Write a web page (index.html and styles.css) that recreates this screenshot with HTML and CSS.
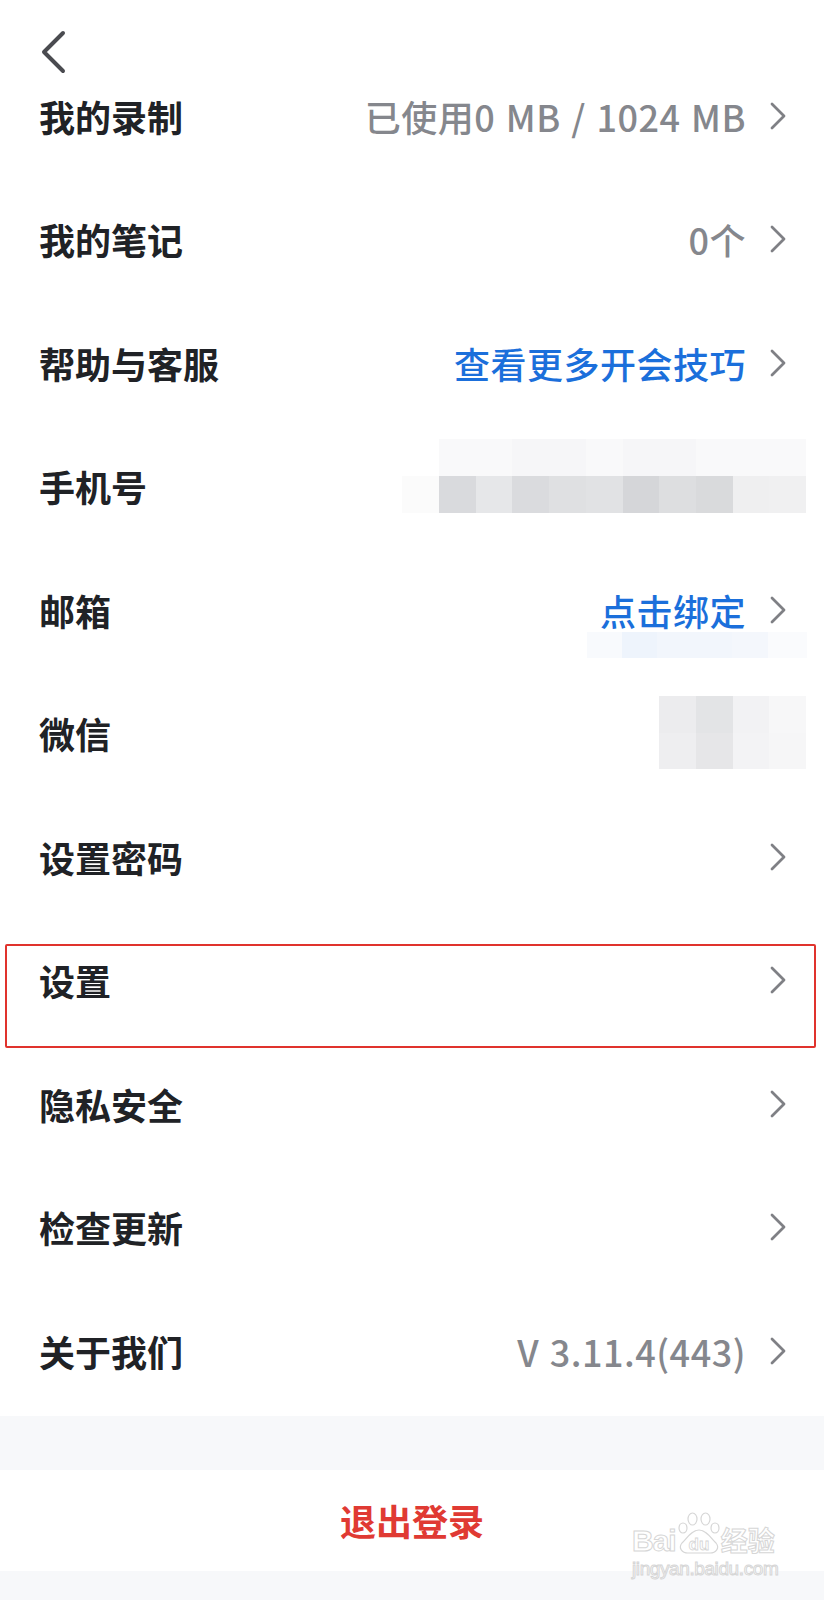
FILE: index.html
```html
<!DOCTYPE html>
<html lang="zh-CN">
<head>
  <meta charset="UTF-8">
  <meta name="viewport" content="width=device-width, initial-scale=1.0">
  <link rel="stylesheet" href="styles.css">
  <title>个人设置</title>
</head>
<body>
  <div class="header">
    <svg class="back" width="30" height="46" viewBox="0 0 30 46">
      <polyline points="24,3 5,22 24,41" fill="none" stroke="#4a4b50" stroke-width="4" stroke-linecap="round" stroke-linejoin="round"/>
    </svg>
  </div>

  <ul class="list">
    <li class="item">
      <span class="label">我的录制</span>
      <span class="value">已使用0 MB / 1024 MB</span>
      <svg class="arrow" width="17" height="28" viewBox="0 0 17 28"><polyline points="2,2 14,14 2,26" fill="none" stroke="#7f8085" stroke-width="2.8" stroke-linecap="round" stroke-linejoin="round"/></svg>
    </li>
    <li class="item">
      <span class="label">我的笔记</span>
      <span class="value">0个</span>
      <svg class="arrow" width="17" height="28" viewBox="0 0 17 28"><polyline points="2,2 14,14 2,26" fill="none" stroke="#7f8085" stroke-width="2.8" stroke-linecap="round" stroke-linejoin="round"/></svg>
    </li>
    <li class="item">
      <span class="label">帮助与客服</span>
      <span class="value link">查看更多开会技巧</span>
      <svg class="arrow" width="17" height="28" viewBox="0 0 17 28"><polyline points="2,2 14,14 2,26" fill="none" stroke="#7f8085" stroke-width="2.8" stroke-linecap="round" stroke-linejoin="round"/></svg>
    </li>
    <li class="item">
      <span class="label">手机号</span>
      <!-- mosaic over the phone number -->
      <div class="mosaic phone">
        <i></i><i></i><i></i><i></i><i></i><i></i><i></i><i></i><i></i><i></i>
        <i></i><i></i><i></i><i></i><i></i><i></i><i></i><i></i><i></i><i></i>
      </div>
      <div class="mosaic phone-edge"></div>
    </li>
    <li class="item">
      <span class="label">邮箱</span>
      <span class="value link">点击绑定</span>
      <svg class="arrow" width="17" height="28" viewBox="0 0 17 28"><polyline points="2,2 14,14 2,26" fill="none" stroke="#7f8085" stroke-width="2.8" stroke-linecap="round" stroke-linejoin="round"/></svg>
      <div class="mosaic mail">
        <i></i><i></i><i></i><i></i><i></i>
      </div>
    </li>
    <li class="item">
      <span class="label">微信</span>
      <div class="mosaic wechat">
        <i></i><i></i><i></i><i></i>
        <i></i><i></i><i></i><i></i>
      </div>
    </li>
    <li class="item">
      <span class="label">设置密码</span>
      <span class="value"></span>
      <svg class="arrow" width="17" height="28" viewBox="0 0 17 28"><polyline points="2,2 14,14 2,26" fill="none" stroke="#7f8085" stroke-width="2.8" stroke-linecap="round" stroke-linejoin="round"/></svg>
    </li>
    <li class="item">
      <span class="label">设置</span>
      <span class="value"></span>
      <svg class="arrow" width="17" height="28" viewBox="0 0 17 28"><polyline points="2,2 14,14 2,26" fill="none" stroke="#7f8085" stroke-width="2.8" stroke-linecap="round" stroke-linejoin="round"/></svg>
      <div class="highlight"></div>
    </li>
    <li class="item">
      <span class="label">隐私安全</span>
      <span class="value"></span>
      <svg class="arrow" width="17" height="28" viewBox="0 0 17 28"><polyline points="2,2 14,14 2,26" fill="none" stroke="#7f8085" stroke-width="2.8" stroke-linecap="round" stroke-linejoin="round"/></svg>
    </li>
    <li class="item">
      <span class="label">检查更新</span>
      <span class="value"></span>
      <svg class="arrow" width="17" height="28" viewBox="0 0 17 28"><polyline points="2,2 14,14 2,26" fill="none" stroke="#7f8085" stroke-width="2.8" stroke-linecap="round" stroke-linejoin="round"/></svg>
    </li>
    <li class="item">
      <span class="label">关于我们</span>
      <span class="value">V 3.11.4(443)</span>
      <svg class="arrow" width="17" height="28" viewBox="0 0 17 28"><polyline points="2,2 14,14 2,26" fill="none" stroke="#7f8085" stroke-width="2.8" stroke-linecap="round" stroke-linejoin="round"/></svg>
    </li>
  </ul>

  <div class="spacer"></div>

  <div class="logout">
    <a href="#" class="logout-btn">退出登录</a>
    <!-- baidu jingyan watermark -->
    <div class="watermark">
      <div class="wm-top">
        <span class="wm-bai">Bai</span>
        <svg class="paw" width="46" height="42" viewBox="0 0 46 42">
          <g fill="#fff" stroke="#d6d6d6" stroke-width="1.2">
            <ellipse cx="7" cy="16" rx="4" ry="5"/>
            <ellipse cx="16.5" cy="7" rx="4.5" ry="6"/>
            <ellipse cx="29.5" cy="7" rx="4.5" ry="6"/>
            <ellipse cx="39" cy="16" rx="4" ry="5"/>
            <path d="M23 18 C30 18 35 26 40 31 C44 36 40 41 34 41 L12 41 C6 41 2 36 6 31 C11 26 16 18 23 18 Z"/>
          </g>
          <text x="23" y="38" text-anchor="middle" class="wm-du">du</text>
        </svg>
        <span class="wm-jy">经验</span>
      </div>
      <div class="wm-url">jingyan.baidu.com</div>
    </div>
  </div>

  <div class="footer"></div>
</body>
</html>
```

FILE: styles.css
```css
*{
  margin: 0;
  padding: 0;
  box-sizing: border-box;
}
body{
  background-color: #fff;
  font-family: "Noto Sans CJK SC", "Noto Sans", sans-serif;
  color: #202226;
}

.header{
  height: 57px;
  padding: 30px 0 0 39px;
  overflow: visible;
}
.back{
  display: block;
}

.list{
  list-style: none;
}
.item{
  height: 123.5px;
  display: flex;
  align-items: center;
  padding: 0 37px 6px 39px;
  position: relative;
}
.label{
  font-size: 36px;
  font-weight: 700;
  color: #202226;
}
.value{
  margin-left: auto;
  font-size: 36px;
  font-weight: 500;
  letter-spacing: 0.5px;
  word-spacing: 2px;
  color: #85878d;
}
.value.link{
  color: #1b6fdb;
}
.arrow{
  margin-left: 24px;
  display: block;
}

/* red annotation box */
.highlight{
  position: absolute;
  left: 5px;
  right: 8px;
  top: 22px;
  bottom: -3px;
  border: 2px solid #e0332d;
  border-radius: 2px;
}

/* blurred blocks */
.mosaic{
  position: absolute;
  display: grid;
}
.mosaic i{
  display: block;
}
.phone{
  left: 439px;
  top: 11px;
  width: 367px;
  grid-template-columns: repeat(10, 1fr);
  grid-template-rows: 37px 37px;
}
.phone-edge{
  left: 402px;
  top: 48px;
  width: 37px;
  height: 37px;
  background: #fbfbfb;
}
.phone i:nth-child(-n+10){ background: #f9f9fa; }
.phone i:nth-child(3), .phone i:nth-child(4), .phone i:nth-child(6), .phone i:nth-child(7){ background: #f6f6f8; }
.phone i:nth-child(11){ background: #d9dadd; }
.phone i:nth-child(12){ background: #e6e7e9; }
.phone i:nth-child(13){ background: #dadbde; }
.phone i:nth-child(14){ background: #dfe0e2; }
.phone i:nth-child(15){ background: #e1e2e4; }
.phone i:nth-child(16){ background: #d5d6d9; }
.phone i:nth-child(17){ background: #dddee0; }
.phone i:nth-child(18){ background: #d9dadc; }
.phone i:nth-child(19){ background: #efeff0; }
.phone i:nth-child(20){ background: #f0f0f1; }

.mail{
  left: 587px;
  top: 81px;
  width: 220px;
  height: 26px;
  grid-template-columns: 35px 35px 75px 36px 39px;
}
.mail i:nth-child(1){ background: #f8fafd; }
.mail i:nth-child(2){ background: #eef4fc; }
.mail i:nth-child(3){ background: #f2f6fc; }
.mail i:nth-child(4){ background: #f4f7fc; }
.mail i:nth-child(5){ background: #fafbfd; }

.wechat{
  left: 659px;
  top: 21px;
  width: 147px;
  grid-template-columns: repeat(4, 1fr);
  grid-template-rows: 37px 36px;
}
.wechat i:nth-child(1){ background: #ececee; }
.wechat i:nth-child(2){ background: #e3e4e6; }
.wechat i:nth-child(3){ background: #f2f2f4; }
.wechat i:nth-child(4){ background: #f7f7f8; }
.wechat i:nth-child(5){ background: #eeeef0; }
.wechat i:nth-child(6){ background: #e6e6e8; }
.wechat i:nth-child(7){ background: #f3f3f5; }
.wechat i:nth-child(8){ background: #f6f6f7; }

.spacer{
  height: 54px;
  background-color: #f7f8fa;
}

.logout{
  height: 101px;
  display: flex;
  justify-content: center;
  align-items: center;
  position: relative;
}
.logout-btn{
  font-size: 36px;
  font-weight: 700;
  color: #e03a33;
  text-decoration: none;
}

.watermark{
  position: absolute;
  left: 632px;
  top: 42px;
  width: 150px;
  font-family: "Liberation Sans", "Noto Sans CJK SC", sans-serif;
  color: #fff;
  -webkit-text-stroke: 1px #d6d6d6;
}
.wm-top{
  display: flex;
  align-items: flex-end;
  height: 42px;
}
.wm-bai{
  font-size: 30px;
  font-weight: 700;
  line-height: 26px;
  letter-spacing: -1px;
}
.paw{
  display: block;
  margin: 0 -1px 0 0;
}
.wm-du{
  font-family: "Liberation Sans", sans-serif;
  font-size: 17px;
  font-weight: 700;
  fill: #fff;
  stroke: #d6d6d6;
  stroke-width: 0.8;
}
.wm-jy{
  font-family: "Noto Sans CJK SC", sans-serif;
  font-size: 27px;
  font-weight: 700;
  line-height: 28px;
}
.wm-url{
  font-size: 19px;
  line-height: 22px;
  margin-top: 4px;
  letter-spacing: -0.4px;
}

.footer{
  height: 40px;
  background-color: #f7f8fa;
}
```
